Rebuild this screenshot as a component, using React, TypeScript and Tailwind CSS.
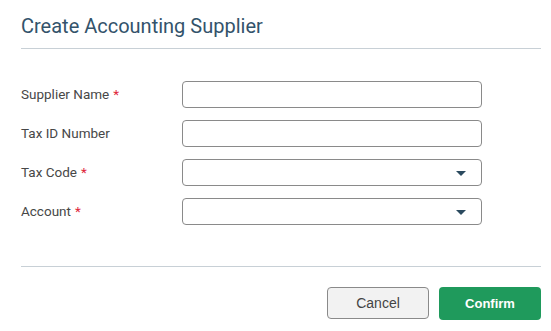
const fields = [
  { label: 'Supplier Name', required: true, select: false },
  { label: 'Tax ID Number', required: false, select: false },
  { label: 'Tax Code', required: true, select: true },
  { label: 'Account', required: true, select: true },
];

export default function App() {
  return (
    <div className="w-[551px] h-[331px] bg-white font-['Roboto',sans-serif]">
      <div className="pl-[21px] pr-[10px]">
        <h1 className="pt-[14px] pb-[10px] text-[20px] leading-[24px] text-[#33536b]">
          Create Accounting Supplier
        </h1>
        <div className="h-px bg-[#c8d0d6]" />
        <div className="flex flex-col gap-[12px] pt-[32px] pb-[41px]">
          {fields.map((f) => (
            <div key={f.label} className="flex items-center h-[27px]">
              <label className="w-[161px] text-[13.5px] text-[#474747]">
                {f.label}
                {f.required && <span className="text-[#e0263a] ml-[4px]">*</span>}
              </label>
              <div className="relative w-[300px] h-[27px] rounded-[4px] border border-[#8a8a8a] bg-white">
                {f.select && (
                  <svg
                    className="absolute right-[15px] top-[11px]"
                    width="10"
                    height="5"
                    viewBox="0 0 10 5"
                  >
                    <path d="M0 0 L10 0 L5 5 Z" fill="#2b4a5f" />
                  </svg>
                )}
              </div>
            </div>
          ))}
        </div>
        <div className="h-px bg-[#c8d0d6]" />
        <div className="flex justify-end gap-[10px] pt-[20px] font-['Liberation_Sans',sans-serif]">
          <button className="w-[102px] h-[32px] rounded-[4px] border border-[#8a8a8a] bg-[#f2f2f2] text-[14px] text-[#444]">
            Cancel
          </button>
          <button className="w-[102px] h-[33px] rounded-[4px] bg-[#1f9a5c] text-[13px] font-bold text-white">
            Confirm
          </button>
        </div>
      </div>
    </div>
  );
}
